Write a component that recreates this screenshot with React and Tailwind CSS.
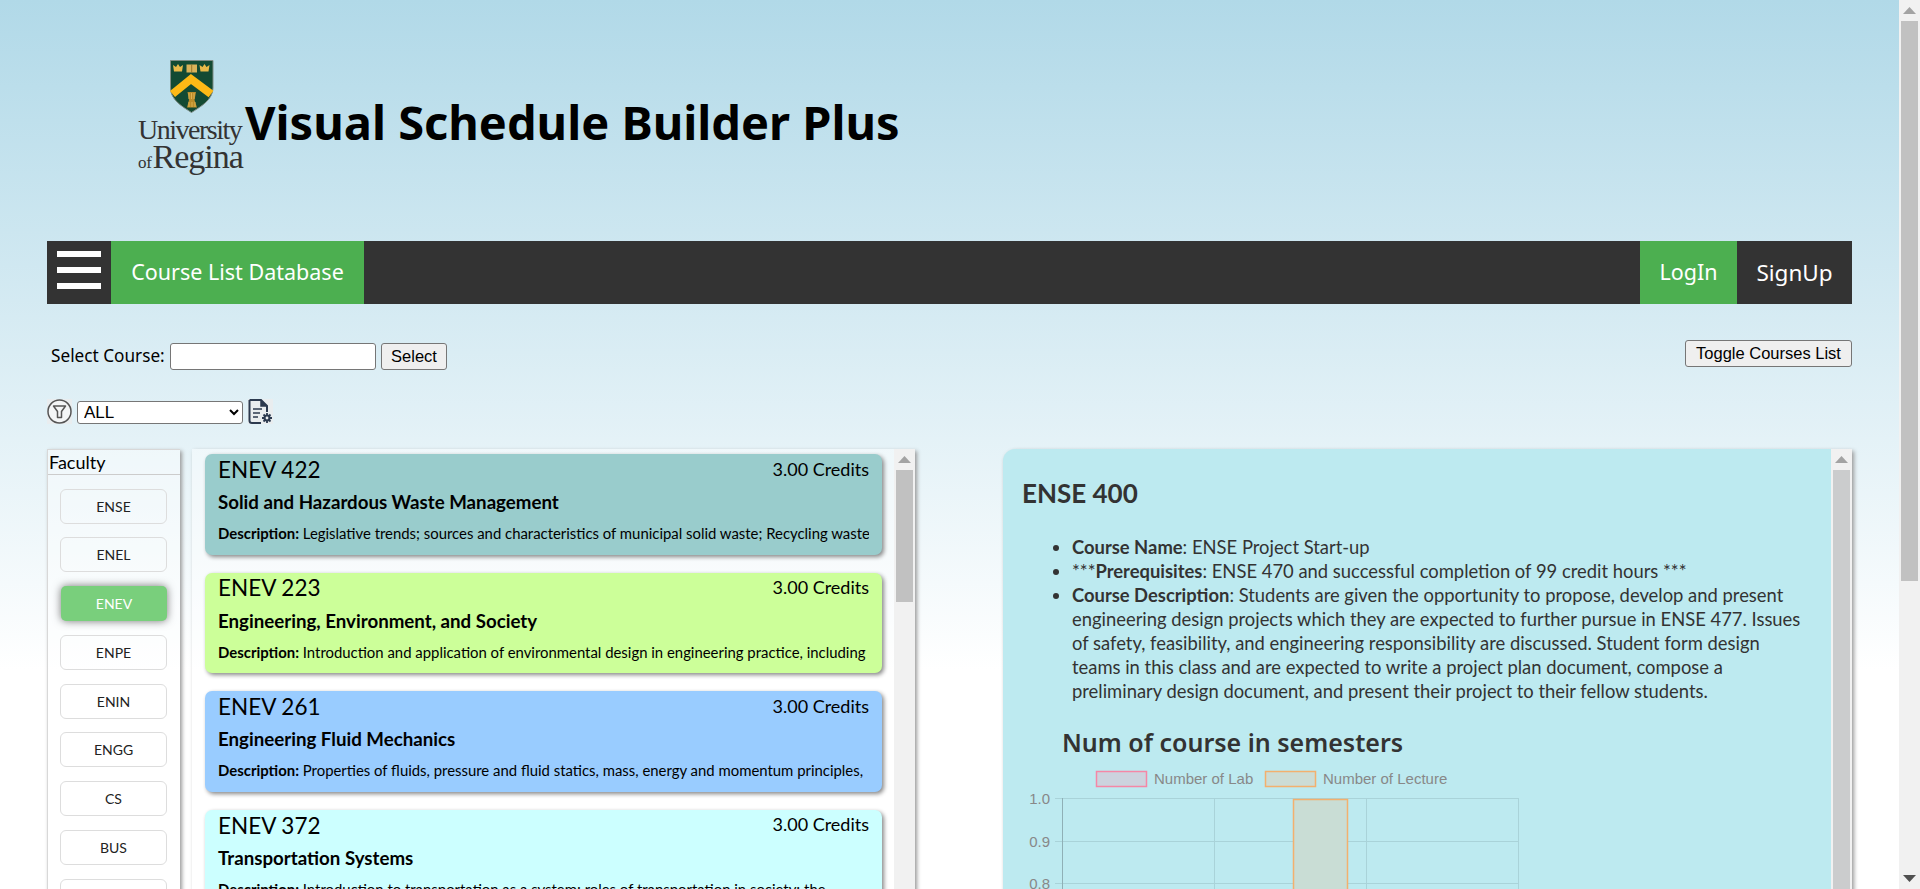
const courses = [
  { code: "ENEV 422", title: "Solid and Hazardous Waste Management", desc: "Legislative trends; sources and characteristics of municipal solid waste; Recycling waste", bg: "bg-[#99cccc]" },
  { code: "ENEV 223", title: "Engineering, Environment, and Society", desc: "Introduction and application of environmental design in engineering practice, including", bg: "bg-[#ccff99]" },
  { code: "ENEV 261", title: "Engineering Fluid Mechanics", desc: "Properties of fluids, pressure and fluid statics, mass, energy and momentum principles,", bg: "bg-[#99ccff]" },
  { code: "ENEV 372", title: "Transportation Systems", desc: "Introduction to transportation as a system; roles of transportation in society; the", bg: "bg-[#ccffff]" },
];
const faculties = ["ENSE", "ENEL", "ENEV", "ENPE", "ENIN", "ENGG", "CS", "BUS", ""];

function Arrow({ down, color }) {
  return (
    <svg width="15" height="8" viewBox="0 0 15 8" className="block">
      <path d={down ? "M1 0H14L7.5 7Z" : "M7.5 0L14 7H1Z"} fill={color} />
    </svg>
  );
}

function Logo() {
  return (
    <div className="w-[108px] flex flex-col items-start font-['Liberation_Serif',serif] text-[#333]">
      <svg width="44" height="53" viewBox="0 0 44 53" className="ml-[33px] block">
        <path d="M0.5 0.5H43V28C43 40 30 47 21.500 52.500C13 47 0.5 40 0.5 28Z" fill="#134a33" stroke="#7f8c85" />
        <path d="M2.500 34L21 19L41 34" fill="none" stroke="#fdb916" strokeWidth="8" />
        <path d="M3 5L6 7L8 4L10 7L13 5L12 11.500H4Z" fill="#e9b949" />
        <path d="M29.500 5L32.500 7L34.500 4L36.500 7L39.500 5L38.500 11.500H30.500Z" fill="#e9b949" />
        <path d="M16.500 4.500H27V12.500H16.500Z" fill="#d9b25a" />
        <path d="M21.700 4.500V12.500" stroke="#8a6a20" strokeWidth="0.800" />
        <path d="M17.500 32H26L24.500 40L27 47.500H17L19 40Z" fill="#b98c2a" />
        <path d="M19 33V39M21.500 33V39M24 33V39M19 42V47M22 42V47M25 42V47" stroke="#e4bd5a" strokeWidth="0.800" />
      </svg>
      <div className="text-[28px] leading-[26px] tracking-[-1.500px] mt-[4px] ml-[1px] whitespace-nowrap">University</div>
      <div className="flex items-baseline leading-[28px] ml-[1px] whitespace-nowrap">
        <span className="text-[17px] tracking-[-0.300px]">of</span>
        <span className="text-[34px] tracking-[-1px] ml-[1px]">Regina</span>
      </div>
    </div>
  );
}

function FilterIcon() {
  return (
    <svg width="25" height="25" viewBox="0 0 25 25" className="block">
      <rect width="25" height="25" fill="#e9edef" />
      <circle cx="12.500" cy="12.500" r="11.500" fill="#f3f5f6" stroke="#555" strokeWidth="1.500" />
      <path d="M6.500 7H18.500L14.500 12.500V18.500H10.500V12.500Z" fill="none" stroke="#555" strokeWidth="1.500" strokeLinejoin="round" />
    </svg>
  );
}

function DocIcon() {
  return (
    <svg width="25" height="25" viewBox="0 0 25 25" className="block">
      <rect width="25" height="25" fill="#e9edef" />
      <path d="M1.500 1H13L19 7V13M13 24H4Q1.500 24 1.500 21.500V1" fill="none" stroke="#2c3a4f" strokeWidth="2" />
      <path d="M13 1V7H19" fill="#2c3a4f" stroke="#2c3a4f" strokeWidth="1.500" />
      <path d="M5 10H14M5 14H12M5 18H10" stroke="#2c3a4f" strokeWidth="1.500" />
      <path d="M19 14V24M14 19H24M15.500 15.500L22.500 22.500M22.500 15.500L15.500 22.500" stroke="#2c3a4f" strokeWidth="1.800" />
      <circle cx="19" cy="19" r="3.500" fill="#2c3a4f" />
      <circle cx="19" cy="19" r="1.400" fill="#e9edef" />
    </svg>
  );
}

function Chart() {
  const grid = "#a9d3d9";
  const tick = { fontSize: 15, fill: "#888", textAnchor: "end" };
  return (
    <svg width="500" height="130" viewBox="0 0 500 130" className="block mt-[5px]" fontFamily="'Liberation Sans', sans-serif">
      <rect x="74.500" y="7.500" width="50" height="15" fill="#ccd3de" stroke="#f587a6" strokeWidth="1.500" />
      <text x="132" y="20" fontSize="15" fill="#888">Number of Lab</text>
      <rect x="243.500" y="7.500" width="50" height="15" fill="#ccdcd5" stroke="#f3b06e" strokeWidth="1.500" />
      <text x="301" y="20" fontSize="15" fill="#888">Number of Lecture</text>
      {[34.5, 77.5, 119.5].map((y) => (
        <path key={y} d={`M33 ${y}H496`} stroke={grid} />
      ))}
      <path d="M40.500 34V130" stroke="#8fb0b6" />
      <path d="M192.500 34V130M344.500 34V130M496.500 34V130" stroke={grid} />
      <rect x="271.500" y="35.500" width="54" height="110" fill="#c9ddd5" stroke="#f3b06e" strokeWidth="1.500" />
      <text x="28" y="40" {...tick}>1.0</text>
      <text x="28" y="83" {...tick}>0.9</text>
      <text x="28" y="125" {...tick}>0.8</text>
    </svg>
  );
}

export default function App() {
  const ui = "font-['Noto_Sans',sans-serif]";
  const cal = "font-['Lato',sans-serif]";
  const btn = "h-[27px] bg-[#efefef] border border-[#767676] rounded-[3px] font-['Liberation_Sans',sans-serif] text-[16.500px] text-black";
  return (
    <div className="w-full h-[889px] overflow-hidden flex bg-[linear-gradient(#b1d9e8,#ffffff_670px)]">
      <div className="flex-1 min-w-0 h-[889px] overflow-hidden px-[47px]">
        <header className="h-[241px] flex items-start pt-[60px] pl-[90px]">
          <Logo />
          <h1 className={`${ui} font-bold text-[47px] leading-[60px] mt-[32px] text-black whitespace-nowrap`}>
            Visual Schedule Builder Plus
          </h1>
        </header>

        <nav className={`${ui} h-[63px] bg-[#333333] flex text-white text-[21.500px]`}>
          <div className="w-[64px] p-[10px] flex flex-col gap-[10px]">
            <div className="h-[6px] bg-white" />
            <div className="h-[6px] bg-white" />
            <div className="h-[6px] bg-white" />
          </div>
          <div className="w-[253px] bg-[#4caf50] flex items-center justify-center">Course List Database</div>
          <div className="flex-1" />
          <div className="w-[97px] bg-[#4caf50] flex items-center justify-center">LogIn</div>
          <div className="w-[115px] flex items-center justify-center text-[22.500px]">SignUp</div>
        </nav>

        <div className="mt-[36px] flex justify-between items-start h-[59px]">
          <div className={`${ui} flex items-center mt-[3px] ml-[4px] text-[17.200px] text-black`}>
            <span className="w-[119px] -mt-[1px]">Select Course:</span>
            <input className="w-[206px] h-[27px] bg-white border border-[#767676] rounded-[3px]" />
            <button className={`${btn} w-[66px] ml-[5px]`}>Select</button>
          </div>
          <button className={`${btn} w-[167px] pb-[1px]`}>Toggle Courses List</button>
        </div>

        <div className="h-[50px] flex items-start">
          <FilterIcon />
          <select className="w-[166px] h-[23px] mt-[2px] ml-[5px] mr-[5px] pl-[2px] bg-white border border-[#767676] rounded-[3px] font-['Liberation_Sans',sans-serif] text-[17px] text-black leading-none">
            <option>ALL</option>
          </select>
          <DocIcon />
        </div>

        <div className="flex items-start h-[460px]">
          <aside className={`${cal} w-[133px] h-[460px] bg-white/40 shadow-[2px_2px_4px_#999] border-t border-l border-[#d8d8d8] shrink-0`}>
            <div className="h-[25px] border-b border-[#cccccc] pl-[1px] text-[18px] leading-[24px] text-black">Faculty</div>
            <div className="flex flex-col gap-[13.800px] pt-[13.500px] px-[12px]">
              {faculties.map((f, i) =>
                f === "ENEV" ? (
                  <div key={i} className="h-[35px] w-[106px] ml-[1px] rounded-[5px] bg-[#79cf7c] text-white text-[14px] flex items-center justify-center shadow-[0_0_8px_#777]">
                    {f}
                  </div>
                ) : (
                  <div key={i} className="h-[35px] w-[107px] rounded-[6px] border border-[#dddddd] text-[#222] text-[14px] flex items-center justify-center">
                    {f}
                  </div>
                )
              )}
            </div>
          </aside>

          <section className={`${cal} w-[723px] ml-[12px] h-[460px] flex bg-white/40 shadow-[2px_2px_4px_#999] shrink-0`}>
            <div className="flex-1 min-w-0 pl-[13px] pr-[12px] pt-[5px] flex flex-col gap-[18px]">
              {courses.map((c) => (
                <article key={c.code} className={`${c.bg} h-[100.67px] shrink-0 rounded-[7px] px-[13px] shadow-[2px_2px_4px_#888] text-black`}>
                  <div className="flex justify-between h-[32px] items-center">
                    <span className="text-[22.500px] -mt-[1px]">{c.code}</span>
                    <span className="text-[18px] -mt-[2px]">3.00 Credits</span>
                  </div>
                  <div className="h-[32px] leading-[32px] text-[18.700px] font-bold whitespace-nowrap">{c.title}</div>
                  <div className="h-[30px] leading-[30px] text-[14.900px] whitespace-nowrap overflow-hidden">
                    <b>Description:</b> {c.desc}
                  </div>
                </article>
              ))}
            </div>
            <div className="w-[21px] bg-[#f1f1f1] flex flex-col items-center shrink-0">
              <div className="h-[21px] flex items-center justify-center"><Arrow color="#a3a3a3" /></div>
              <div className="w-[17px] h-[132px] bg-[#c1c1c1]" />
            </div>
          </section>

          <section className={`${cal} flex-1 min-w-0 ml-[88px] h-[460px] flex rounded-tl-[12px] bg-[#bdeaf0] shadow-[2px_2px_4px_#999] text-[#333]`}>
            <div className="flex-1 min-w-0 pl-[19px] overflow-hidden">
              <h2 className="text-[26px] font-bold leading-[32px] mt-[28px]">ENSE 400</h2>
              <ul className="list-disc pl-[31px] mt-[26px] text-[18.400px] leading-[24px] ml-[19px] whitespace-nowrap">
                <li><b>Course Name</b>: ENSE Project Start-up</li>
                <li>***<b>Prerequisites</b>: ENSE 470 and successful completion of 99 credit hours ***</li>
                <li>
                  <b>Course Description</b>: Students are given the opportunity to propose, develop and present<br />
                  engineering design projects which they are expected to further pursue in ENSE 477. Issues<br />
                  of safety, feasibility, and engineering responsibility are discussed. Student form design<br />
                  teams in this class and are expected to write a project plan document, compose a<br />
                  preliminary design document, and present their project to their fellow students.
                </li>
              </ul>
              <h3 className={`${ui} text-[25px] font-semibold leading-[34px] mt-[22px] ml-[40px]`}>Num of course in semesters</h3>
              <Chart />
            </div>
            <div className="w-[21px] bg-[#f1f1f1] flex flex-col items-center shrink-0">
              <div className="h-[21px] flex items-center justify-center"><Arrow color="#a3a3a3" /></div>
              <div className="w-[17px] flex-1 bg-[#cbcccd]" />
            </div>
          </section>
        </div>
      </div>

      <div className="w-[21px] h-[889px] bg-[#f1f1f1] flex flex-col items-center shrink-0">
        <div className="h-[21px] flex items-center justify-center"><Arrow color="#a3a3a3" /></div>
        <div className="w-[17px] h-[560px] bg-[#c1c1c1]" />
        <div className="flex-1" />
        <div className="h-[21px] flex items-center justify-center"><Arrow down color="#505050" /></div>
      </div>
    </div>
  );
}
